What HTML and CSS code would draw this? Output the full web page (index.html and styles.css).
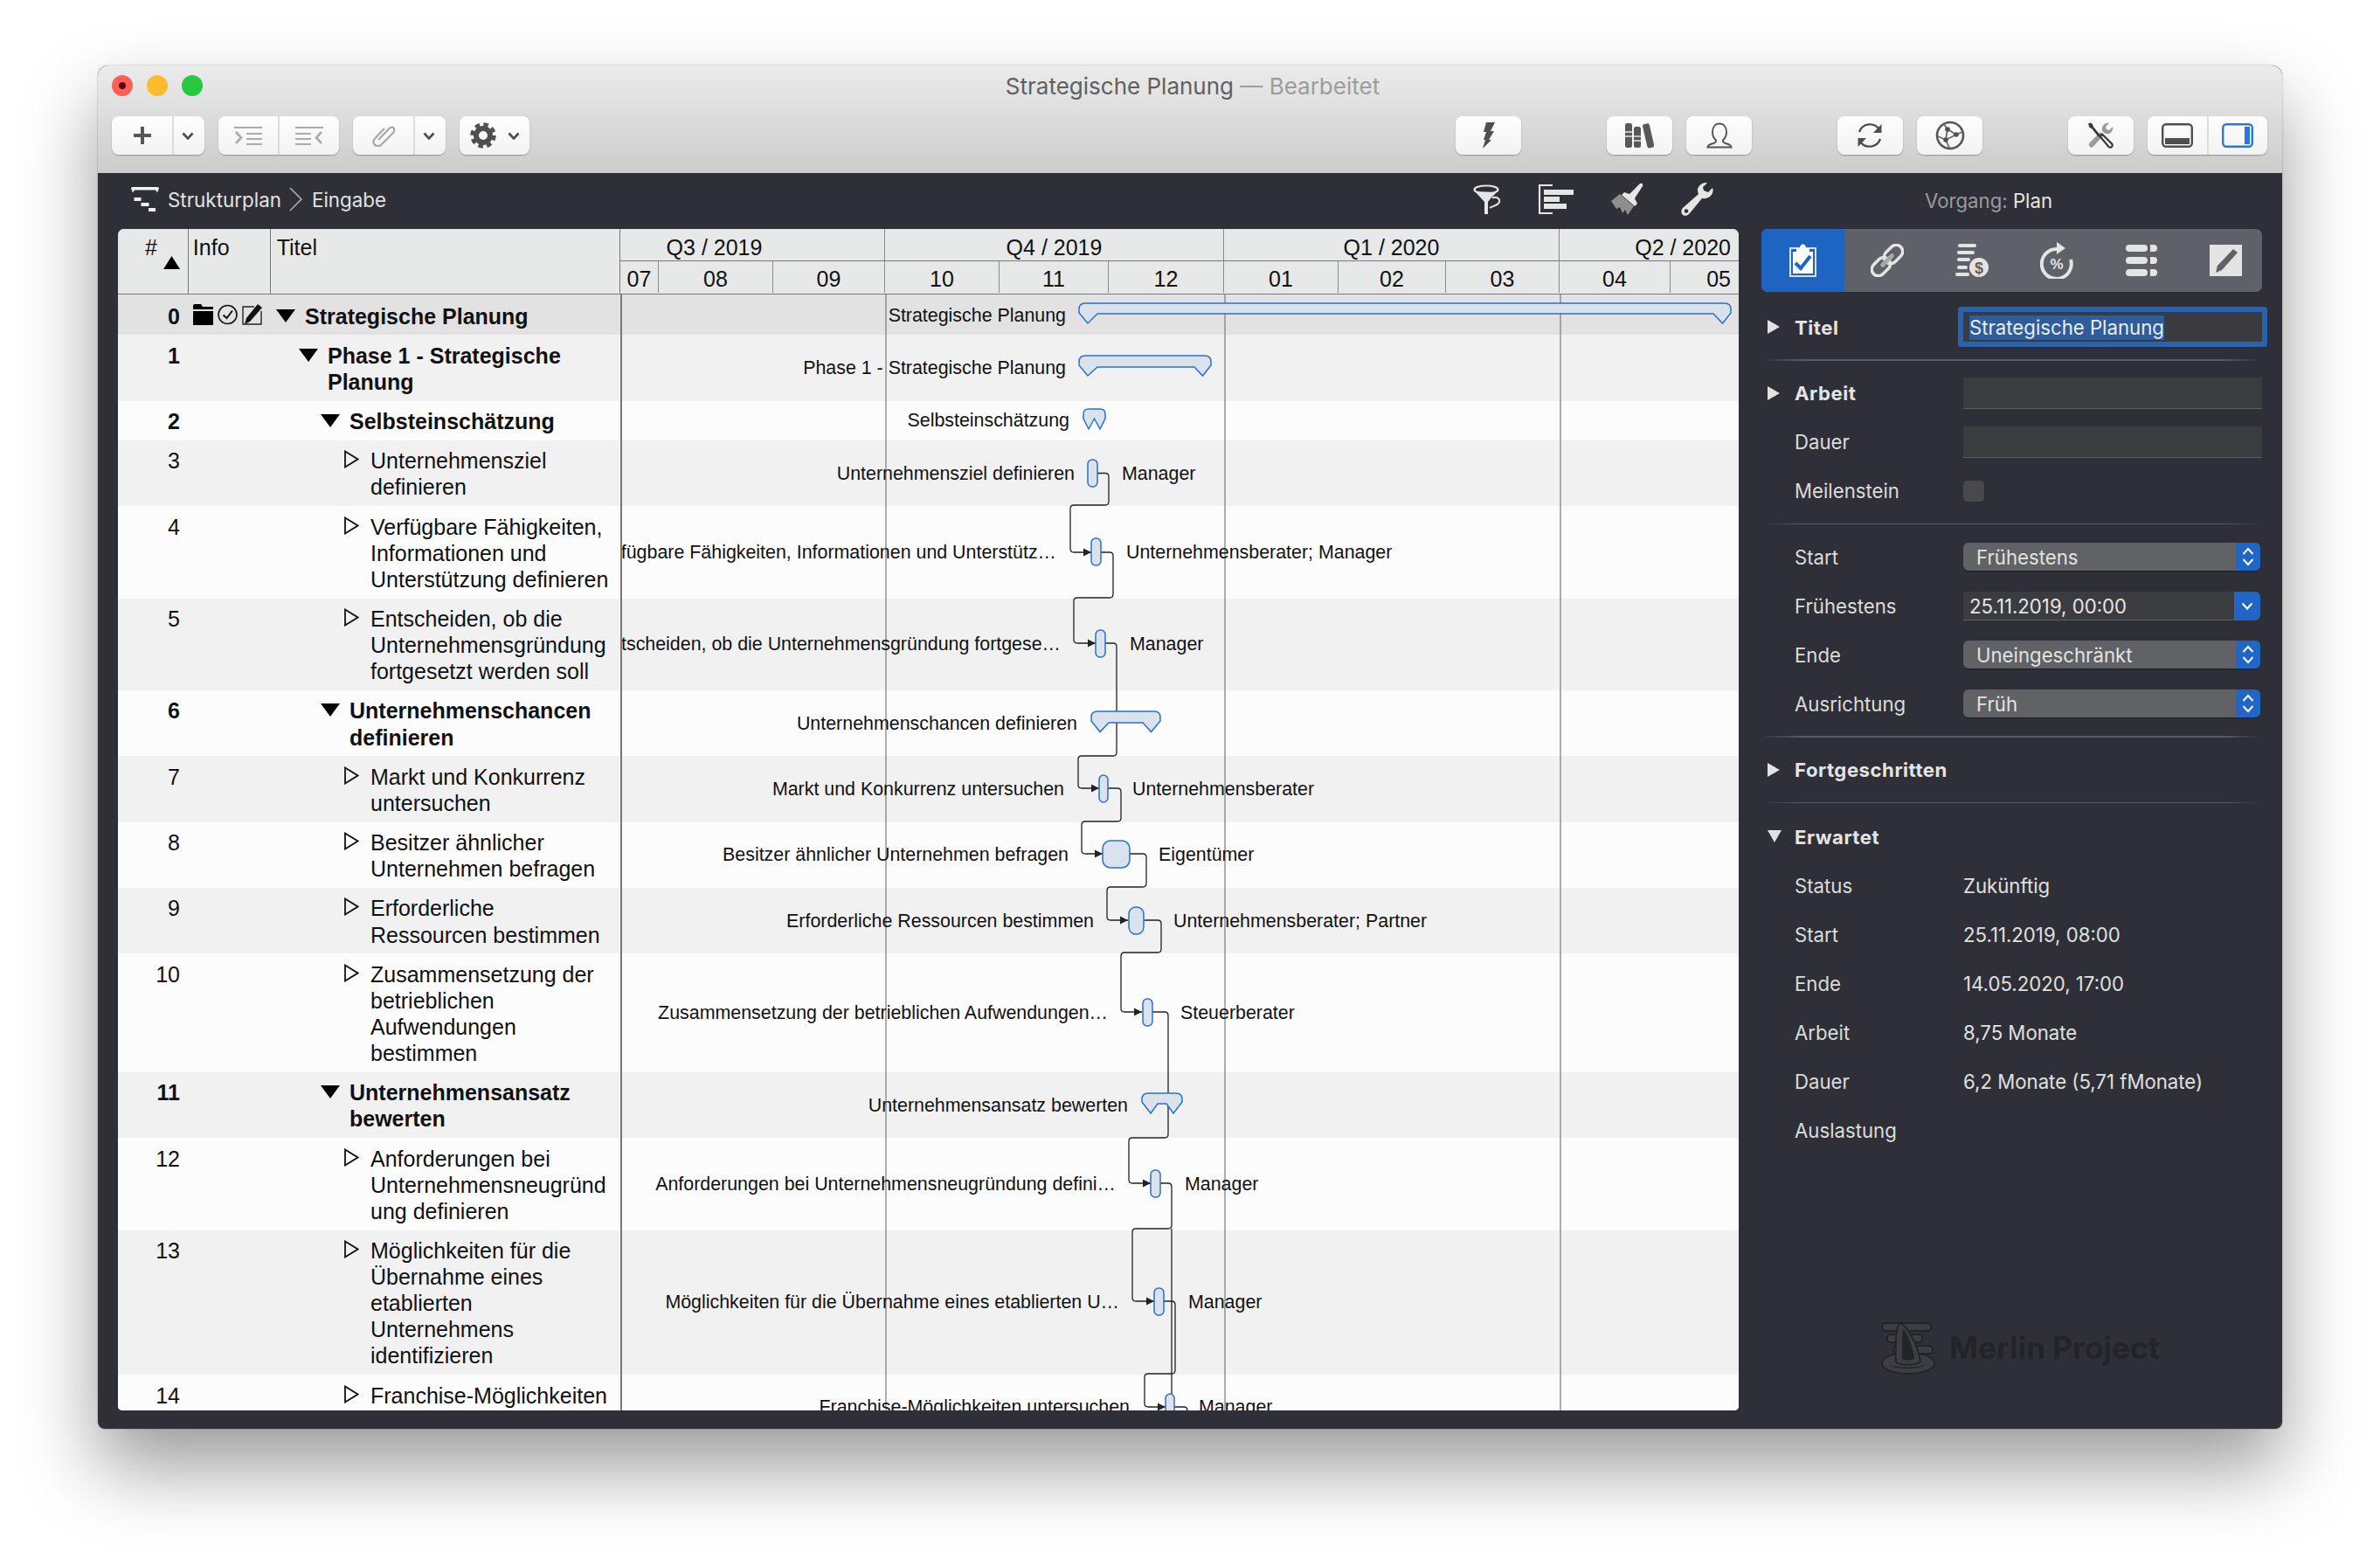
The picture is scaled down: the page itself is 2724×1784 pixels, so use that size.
FILE: index.html
```html
<!DOCTYPE html>
<html lang="de">
<head>
    <meta charset="UTF-8">
    <title>Strategische Planung</title>
    <link rel="stylesheet" href="styles.css">
</head>
<body>
<svg class="defs" width="0" height="0">
    <symbol id="tri-down" viewBox="0 0 22 15"><path d="M0 0H22L11 15Z"/></symbol>
    <symbol id="tri-open" viewBox="0 0 17 21"><path d="M1 1.5L15.5 10.5L1 19.5Z" fill="none" stroke="#111" stroke-width="1.8"/></symbol>
    <symbol id="chev" viewBox="0 0 14 9"><path d="M1.5 1.5L7 7.5L12.5 1.5" fill="none" stroke="#4d4d50" stroke-width="2.6"/></symbol>
    <symbol id="updown" viewBox="0 0 14 24"><path d="M1.5 9L7 3L12.5 9M1.5 15L7 21L12.5 15" fill="none" stroke="#fff" stroke-width="2"/></symbol>
    <symbol id="insp-tri" viewBox="0 0 14 16"><path d="M0 0L14 8L0 16Z" fill="#e2e2e2"/></symbol>
</svg>

<div class="window">
    <div class="titlebar">
        <div class="title-row">
            <div class="lights">
                <span class="light red"></span>
                <span class="light yellow"></span>
                <span class="light green"></span>
            </div>
            <div class="doc-title">Strategische Planung <span class="doc-state">— Bearbeitet</span></div>
            <div></div>
        </div>
        <div class="toolbar">
            <div class="btn-group w-add">
                <div class="btn seg-main"><svg width="20" height="20" viewBox="0 0 20 20"><path d="M8 0h4v8h8v4h-8v8H8v-8H0V8h8z" fill="#56565a"/></svg></div>
                <div class="btn"><svg width="14" height="9"><use href="#chev"/></svg></div>
            </div>
            <div class="btn-group w-indent">
                <div class="btn">
                    <svg width="32" height="21" viewBox="0 0 32 21"><path d="M0 1H32M14 8H32M14 14H32M14 20H32" stroke="#ababab" stroke-width="2"/><path d="M2 6L8 12.500L2 19" fill="none" stroke="#ababab" stroke-width="2.6"/></svg>
                </div>
                <div class="btn">
                    <svg width="32" height="21" viewBox="0 0 32 21"><path d="M0 1H32M0 8H18M0 14H18M0 20H18" stroke="#ababab" stroke-width="2"/><path d="M30 6L24 12.500L30 19" fill="none" stroke="#ababab" stroke-width="2.600"/></svg>
                </div>
            </div>
            <div class="btn-group w-add">
                <div class="btn seg-main">
                    <svg width="28" height="26" viewBox="0 0 28 26"><path d="M8 18L20 5.500C22 3 25.500 3 26 5.500C27 7.500 26 9 24.500 10.500L11 24C8 26 3 25 2.500 21C2 19 3 17.500 4.500 16L15 5" fill="none" stroke="#a8a8a8" stroke-width="2.200"/></svg>
                </div>
                <div class="btn"><svg width="14" height="9"><use href="#chev"/></svg></div>
            </div>
            <div class="btn-group w-gear">
                <div class="btn gear-btn">
                    <svg width="30" height="30" viewBox="0 0 30 30"><circle cx="15" cy="15" r="8" fill="none" stroke="#4f4f52" stroke-width="6"/><circle cx="15" cy="15" r="12.500" fill="none" stroke="#4f4f52" stroke-width="4.500" stroke-dasharray="5.500 4.320"/></svg>
                    <svg width="14" height="9"><use href="#chev"/></svg>
                </div>
            </div>

            <div class="btn-group w-single push">
                <div class="btn"><svg width="14" height="30" viewBox="0 0 14 30"><path d="M4 0H14L9 10H13L7 20H10L0 30L3 20H1L4 11H1Z" fill="#4f4f52"/></svg></div>
            </div>
            <div class="btn-group w-single gap-big">
                <div class="btn">
                    <svg width="33" height="29" viewBox="0 0 33 29"><rect x="0" y="0" width="8" height="28" rx="2.500" fill="#58585c"/><rect x="10" y="4" width="8" height="24" rx="2.500" fill="#58585c"/><rect x="22.500" y="0.500" width="8" height="28" rx="2.500" transform="rotate(-13 26 14)" fill="#58585c"/><path d="M0 10H8M0 15H8M10 15H18M10 20H18" stroke="#e3e3e3" stroke-width="1.400"/></svg>
                </div>
            </div>
            <div class="btn-group w-single gap-small">
                <div class="btn"><svg width="30" height="30" viewBox="0 0 30 30"><path d="M15 1.500c-5 0-8 4-8 10 0 4 2 7 4 9v1c0 2-3 2.500-6 3.500-3 1-3.500 3.500-3.500 3.500h27s-.500-2.500-3.500-3.500c-3-1-6-1.500-6-3.500v-1c2-2 4-5 4-9 0-6-3-10-8-10z" fill="none" stroke="#555558" stroke-width="2"/></svg></div>
            </div>
            <div class="btn-group w-single gap-big">
                <div class="btn">
                    <svg width="30" height="30" viewBox="0 0 30 30"><path d="M3 11A13 13 0 0 1 26 8M27 19A13 13 0 0 1 4 22" fill="none" stroke="#4f4f52" stroke-width="2.300"/><path d="M28.500 2V12H19ZM1.500 28V18H11Z" fill="#4f4f52"/></svg>
                </div>
            </div>
            <div class="btn-group w-single gap-small">
                <div class="btn">
                    <svg width="34" height="34" viewBox="0 0 34 34"><circle cx="17" cy="17" r="15" fill="none" stroke="#555558" stroke-width="2.600"/><path d="M14 10L24 16L12 22L14 10M14 10L9 3M24 16L31 13M12 22L16 31M12 22L3 18" fill="none" stroke="#68686c" stroke-width="1.800"/><circle cx="14" cy="10" r="2.800" fill="#4f4f52"/><circle cx="24" cy="16" r="2.800" fill="#4f4f52"/><circle cx="12" cy="22" r="2.800" fill="#4f4f52"/></svg>
                </div>
            </div>
            <div class="btn-group w-single gap-big">
                <div class="btn">
                    <svg width="30" height="30" viewBox="0 0 30 30"><path d="M3 28c-2-2-1-4 0-5L15 11l3.500 4L6.500 28c-1 1-2 1-3.500 0z M17 10c-1-4 1-8 5-9 2-.500 3 0 3 0l-4 4 1 3 3 1 4-4c.500 3-1 7-4 8-2 .500-4 0-5-.500z" fill="#9b9b9e"/><path d="M1 1.500L3.500 .500L6 2L7 5L15 15L13 17L5 7L2.500 6Z" fill="#39393c"/><path d="M14.500 16L17 13.500L28 24.500C30 27 27 30 24.500 28Z" fill="none" stroke="#39393c" stroke-width="2.200"/></svg>
                </div>
            </div>
            <div class="btn-group w-view gap-small">
                <div class="btn">
                    <svg width="36" height="28" viewBox="0 0 36 28"><rect x="1.200" y="1.200" width="33.600" height="25.600" rx="4" fill="none" stroke="#4f4f52" stroke-width="2.400"/><rect x="4" y="17" width="28" height="7" fill="#4f4f52"/></svg>
                </div>
                <div class="btn">
                    <svg width="36" height="28" viewBox="0 0 36 28"><rect x="1.200" y="1.200" width="33.600" height="25.600" rx="4" fill="none" stroke="#2a76e0" stroke-width="2.400"/><rect x="26" y="4" width="6" height="20" fill="#2a76e0"/></svg>
                </div>
            </div>
        </div>
    </div>

    <div class="content">
        <div class="main">
            <div class="subbar">
                <div class="crumbs">
                    <svg class="crumb-icon" width="32" height="28" viewBox="0 0 32 28"><path d="M1.500 0H30.500Q32 0 32 1.500L30 6.500L28 3.500H4L2 6.500L0 1.500Q0 0 1.500 0Z" fill="#f0f0f0"/><rect x="3.500" y="12" width="8" height="4" fill="#f0f0f0"/><rect x="11.500" y="18" width="9" height="4" fill="#f0f0f0"/><rect x="20" y="24" width="8" height="4" fill="#f0f0f0"/></svg>
                    <span>Strukturplan</span>
                    <svg class="crumb-sep" width="15" height="28" viewBox="0 0 15 28"><path d="M1 1L14 14L1 27" fill="none" stroke="#b5b5b5" stroke-width="1.500"/></svg>
                    <span>Eingabe</span>
                </div>
                <div class="view-tools">
                    <svg width="32" height="34" viewBox="0 0 32 34"><ellipse cx="15" cy="6" rx="13.500" ry="4.500" fill="none" stroke="#e6e6e6" stroke-width="2.200"/><path d="M2 8L13 20V34H17V20L21 15L27 9Z" fill="#e6e6e6"/><path d="M22 15.500C27 13 31 17 30 20C29 24 24 24 19 27" fill="none" stroke="#e6e6e6" stroke-width="2"/></svg>
                    <svg width="40" height="34" viewBox="0 0 40 34"><path d="M16 1H1V33H16" fill="none" stroke="#e6e6e6" stroke-width="2.200"/><rect x="6" y="6" width="34" height="6" fill="#e6e6e6"/><rect x="6" y="14" width="18" height="6" fill="#e6e6e6"/><rect x="6" y="22" width="26" height="6" fill="#e6e6e6"/></svg>
                    <svg width="37" height="38" viewBox="0 0 37 38"><path d="M33 1Q37 0 36 4L27 18L30 24L27 27L12 14L15 11L21 13Z" fill="#e6e6e6"/><path d="M10 13L26 27L19 37L16 31L13 35L10 28L6 30L0 21Z" fill="#8e8e8e"/></svg>
                    <svg width="37" height="38" viewBox="0 0 37 38"><path d="M28 0C24 .500 20 3 19 8C19 10 19.500 11.500 20 13L2 29C-.500 32 0 36 3 37.500C6 38.500 8.500 37 10 35L24 18C27 18.500 31 18 34 15C37 12 37 8 36 6L31 11L26 9L25 5L30 .500Z" fill="#e6e6e6"/><circle cx="6" cy="32.500" r="2.300" fill="#2f3036"/></svg>
                </div>
            </div>

            <div class="table">
                <div class="table-head">
                    <div class="head-num">
                        <span>#</span>
                        <svg class="sort-tri" width="19" height="15" viewBox="0 0 19 15"><path d="M9.500 0L19 15H0Z"/></svg>
                    </div>
                    <div class="head-info">Info</div>
                    <div class="head-title">Titel</div>
                    <div class="timeline">
                        <div class="quarters">
                            <div class="q q3">Q3 / 2019</div>
                            <div class="q q4">Q4 / 2019</div>
                            <div class="q q1">Q1 / 2020</div>
                            <div class="q q2">Q2 / 2020</div>
                        </div>
                        <div class="months">
                            <div class="m m07">07</div>
                            <div class="m m08">08</div>
                            <div class="m m09">09</div>
                            <div class="m m10">10</div>
                            <div class="m m11">11</div>
                            <div class="m m12">12</div>
                            <div class="m m01">01</div>
                            <div class="m m02">02</div>
                            <div class="m m03">03</div>
                            <div class="m m04">04</div>
                            <div class="m m05">05</div>
                        </div>
                    </div>
                </div>

                <div class="rows">
                    <div class="row top bold">
                        <div class="num">0</div>
                        <div class="info">
                            <svg width="23" height="24" viewBox="0 0 23 24"><path d="M0 2Q0 0 2 0H9L11 3H23V6H0ZM0 8H23V24H0Z"/></svg>
                            <svg width="23" height="24" viewBox="0 0 23 24"><circle cx="11.500" cy="12" r="10.500" fill="none" stroke="#111" stroke-width="1.600"/><path d="M6.500 12.500L10.500 16L17 7.500" fill="none" stroke="#111" stroke-width="2"/></svg>
                            <svg width="23" height="24" viewBox="0 0 23 24"><path d="M14 3H1V23H22V8" fill="none" stroke="#222" stroke-width="1.400"/><path d="M18 0L23 4L9 20L3 23L5 16Z" fill="#111"/></svg>
                        </div>
                        <div class="title lv0"><svg class="tri" width="22" height="15"><use href="#tri-down"/></svg><div>Strategische Planung</div></div>
                    </div>
                    <div class="row odd bold">
                        <div class="num">1</div><div class="info"></div>
                        <div class="title lv1"><svg class="tri" width="22" height="15"><use href="#tri-down"/></svg><div>Phase 1 - Strategische<br>Planung</div></div>
                    </div>
                    <div class="row even bold">
                        <div class="num">2</div><div class="info"></div>
                        <div class="title lv2"><svg class="tri" width="22" height="15"><use href="#tri-down"/></svg><div>Selbsteinschätzung</div></div>
                    </div>
                    <div class="row odd">
                        <div class="num">3</div><div class="info"></div>
                        <div class="title lv3"><svg class="tri-o" width="17" height="21"><use href="#tri-open"/></svg><div>Unternehmensziel<br>definieren</div></div>
                    </div>
                    <div class="row even">
                        <div class="num">4</div><div class="info"></div>
                        <div class="title lv3"><svg class="tri-o" width="17" height="21"><use href="#tri-open"/></svg><div>Verfügbare Fähigkeiten,<br>Informationen und<br>Unterstützung definieren</div></div>
                    </div>
                    <div class="row odd">
                        <div class="num">5</div><div class="info"></div>
                        <div class="title lv3"><svg class="tri-o" width="17" height="21"><use href="#tri-open"/></svg><div>Entscheiden, ob die<br>Unternehmensgründung<br>fortgesetzt werden soll</div></div>
                    </div>
                    <div class="row even bold">
                        <div class="num">6</div><div class="info"></div>
                        <div class="title lv2"><svg class="tri" width="22" height="15"><use href="#tri-down"/></svg><div>Unternehmenschancen<br>definieren</div></div>
                    </div>
                    <div class="row odd">
                        <div class="num">7</div><div class="info"></div>
                        <div class="title lv3"><svg class="tri-o" width="17" height="21"><use href="#tri-open"/></svg><div>Markt und Konkurrenz<br>untersuchen</div></div>
                    </div>
                    <div class="row even">
                        <div class="num">8</div><div class="info"></div>
                        <div class="title lv3"><svg class="tri-o" width="17" height="21"><use href="#tri-open"/></svg><div>Besitzer ähnlicher<br>Unternehmen befragen</div></div>
                    </div>
                    <div class="row odd">
                        <div class="num">9</div><div class="info"></div>
                        <div class="title lv3"><svg class="tri-o" width="17" height="21"><use href="#tri-open"/></svg><div>Erforderliche<br>Ressourcen bestimmen</div></div>
                    </div>
                    <div class="row even">
                        <div class="num">10</div><div class="info"></div>
                        <div class="title lv3"><svg class="tri-o" width="17" height="21"><use href="#tri-open"/></svg><div>Zusammensetzung der<br>betrieblichen<br>Aufwendungen<br>bestimmen</div></div>
                    </div>
                    <div class="row odd bold">
                        <div class="num">11</div><div class="info"></div>
                        <div class="title lv2"><svg class="tri" width="22" height="15"><use href="#tri-down"/></svg><div>Unternehmensansatz<br>bewerten</div></div>
                    </div>
                    <div class="row even">
                        <div class="num">12</div><div class="info"></div>
                        <div class="title lv3"><svg class="tri-o" width="17" height="21"><use href="#tri-open"/></svg><div>Anforderungen bei<br>Unternehmensneugründ<br>ung definieren</div></div>
                    </div>
                    <div class="row odd">
                        <div class="num">13</div><div class="info"></div>
                        <div class="title lv3"><svg class="tri-o" width="17" height="21"><use href="#tri-open"/></svg><div>Möglichkeiten für die<br>Übernahme eines<br>etablierten<br>Unternehmens<br>identifizieren</div></div>
                    </div>
                    <div class="row even">
                        <div class="num">14</div><div class="info"></div>
                        <div class="title lv3"><svg class="tri-o" width="17" height="21"><use href="#tri-open"/></svg><div>Franchise-Möglichkeiten</div></div>
                    </div>

                    <svg class="gantt" width="1280" height="1277" viewBox="710 337 1280 1277">
                        <defs>
                            <marker id="arrow" markerUnits="userSpaceOnUse" markerWidth="10" markerHeight="10" refX="9" refY="5" orient="auto"><path d="M0 0.500L9 5L0 9.500Z" fill="#222"/></marker>
                        </defs>
                        <path class="grid" d="M1014 337V1614M1402 337V1614M1786 337V1614"/>

                        <g class="links">
                            <path d="M1256 541.500H1265Q1269 541.500 1269 545.500V574Q1269 578 1265 578H1229Q1225 578 1225 582V628Q1225 632 1229 632H1249" marker-end="url(#arrow)"/>
                            <path d="M1260 632H1270Q1274 632 1274 636V680Q1274 684 1270 684H1233Q1229 684 1229 688V732Q1229 736 1233 736H1254" marker-end="url(#arrow)"/>
                            <path d="M1265 736H1274Q1278 736 1278 740V861Q1278 865 1274 865H1238Q1234 865 1234 869V898Q1234 902 1238 902H1258" marker-end="url(#arrow)"/>
                            <path d="M1268 902H1279Q1283 902 1283 906V936Q1283 940 1279 940H1242Q1238 940 1238 944V973Q1238 977 1242 977H1262" marker-end="url(#arrow)"/>
                            <path d="M1293 977H1308Q1312 977 1312 981V1011Q1312 1015 1308 1015H1271Q1267 1015 1267 1019V1049Q1267 1053 1271 1053H1291" marker-end="url(#arrow)"/>
                            <path d="M1310 1053H1325Q1329 1053 1329 1057V1086Q1329 1090 1325 1090H1287Q1283 1090 1283 1094V1154Q1283 1158 1287 1158H1307" marker-end="url(#arrow)"/>
                            <path d="M1319 1158H1333Q1337 1158 1337 1162V1298Q1337 1302 1333 1302H1296Q1292 1302 1292 1306V1350Q1292 1354 1296 1354H1317" marker-end="url(#arrow)"/>
                            <path d="M1328 1354H1337Q1341 1354 1341 1358V1402Q1341 1406 1337 1406H1300Q1296 1406 1296 1410V1485Q1296 1489 1300 1489H1321" marker-end="url(#arrow)"/>
                            <path d="M1341 1406V1614"/>
                            <path d="M1332 1489H1341Q1345 1489 1345 1493V1568Q1345 1572 1341 1572H1314Q1310 1572 1310 1576V1606Q1310 1610 1314 1610H1334" marker-end="url(#arrow)"/>
                            <path d="M1344 1610H1355Q1359 1610 1359 1614"/>
                        </g>

                        <g class="bars">
                            <path d="M1242 347H1974Q1981 347 1981 354V358L1971.500 370L1961 359H1256L1245 370L1235 358V354Q1235 347 1242 347Z"/>
                            <path d="M1242 407H1379Q1386 407 1386 414V418L1376.500 430L1367 420H1256L1245 430L1235 418V414Q1235 407 1242 407Z"/>
                            <path d="M1246 468H1259Q1265 468 1265 474V479L1259 491L1252.500 479L1246 491L1240 479V474Q1240 468 1246 468Z"/>
                            <rect x="1245" y="526" width="11" height="31" rx="5"/>
                            <rect x="1249" y="616" width="11" height="31" rx="5"/>
                            <rect x="1254" y="721" width="11" height="31" rx="5"/>
                            <path d="M1256 814H1321Q1328 814 1328 821V825L1317.500 837.500L1308 827H1269L1259 837.500L1249 825V821Q1249 814 1256 814Z"/>
                            <rect x="1258" y="887" width="10" height="31" rx="5"/>
                            <rect x="1262" y="962" width="31" height="31" rx="9"/>
                            <rect x="1292" y="1038" width="17" height="31" rx="8"/>
                            <rect x="1308" y="1143" width="11" height="31" rx="5"/>
                            <path d="M1314 1251H1346Q1353 1251 1353 1258V1261L1343 1274L1335 1263H1325L1317 1274L1307 1261V1258Q1307 1251 1314 1251Z"/>
                            <rect x="1317" y="1339" width="11" height="31" rx="5"/>
                            <rect x="1321" y="1474" width="11" height="31" rx="5"/>
                            <rect x="1334" y="1595" width="10" height="31" rx="5"/>
                        </g>

                        <g class="labels-left">
                            <text x="1220" y="368">Strategische Planung</text>
                            <text x="1220" y="428">Phase 1 - Strategische Planung</text>
                            <text x="1224" y="488">Selbsteinschätzung</text>
                            <text x="1230" y="549">Unternehmensziel definieren</text>
                            <text x="1209" y="639">Verfügbare Fähigkeiten, Informationen und Unterstütz…</text>
                            <text x="1214" y="744">Entscheiden, ob die Unternehmensgründung fortgese…</text>
                            <text x="1233" y="835">Unternehmenschancen definieren</text>
                            <text x="1218" y="910">Markt und Konkurrenz untersuchen</text>
                            <text x="1223" y="985">Besitzer ähnlicher Unternehmen befragen</text>
                            <text x="1252" y="1061">Erforderliche Ressourcen bestimmen</text>
                            <text x="1268" y="1166">Zusammensetzung der betrieblichen Aufwendungen…</text>
                            <text x="1291" y="1272">Unternehmensansatz bewerten</text>
                            <text x="1277" y="1362">Anforderungen bei Unternehmensneugründung defini…</text>
                            <text x="1281" y="1497">Möglichkeiten für die Übernahme eines etablierten U…</text>
                            <text x="1293" y="1617">Franchise-Möglichkeiten untersuchen</text>
                        </g>
                        <g class="labels-right">
                            <text x="1284" y="549">Manager</text>
                            <text x="1289" y="639">Unternehmensberater; Manager</text>
                            <text x="1293" y="744">Manager</text>
                            <text x="1296" y="910">Unternehmensberater</text>
                            <text x="1326" y="985">Eigentümer</text>
                            <text x="1343" y="1061">Unternehmensberater; Partner</text>
                            <text x="1351" y="1166">Steuerberater</text>
                            <text x="1356" y="1362">Manager</text>
                            <text x="1360" y="1497">Manager</text>
                            <text x="1372" y="1617">Manager</text>
                        </g>
                    </svg>
                </div>
            </div>
        </div>

        <div class="inspector">
            <div class="insp-head"><span class="dim">Vorgang:</span> Plan</div>
            <div class="tabs">
                <div class="tab active">
                    <svg width="31" height="38" viewBox="0 0 31 38"><rect x="1" y="5" width="29" height="32" fill="none" stroke="#e8eefb" stroke-width="1.800"/><rect x="4" y="9" width="23" height="25" fill="#fff"/><path d="M8 5H12C12 2 13.500 .500 15.500 .500C17.500 .500 19 2 19 5H23V10H8Z" fill="#fff"/><path d="M7 22L13 28L24 14" fill="none" stroke="#1d64c3" stroke-width="4"/></svg>
                </div>
                <div class="tab">
                    <svg width="38" height="38" viewBox="0 0 38 38"><g transform="rotate(-45 19 19)"><rect x="-3" y="11.500" width="24" height="15" rx="7.500" fill="none" stroke="#e4e4e4" stroke-width="3.500"/><rect x="17" y="11.500" width="24" height="15" rx="7.500" fill="none" stroke="#e4e4e4" stroke-width="3.500"/><rect x="9" y="16.500" width="20" height="5" rx="2.500" fill="#a9a9a9"/></g></svg>
                </div>
                <div class="tab">
                    <svg width="38" height="38" viewBox="0 0 38 38"><rect x="3" y="0" width="21" height="4" rx="2" fill="#e4e4e4"/><rect x="2" y="8" width="20" height="4" rx="2" fill="#e4e4e4"/><rect x="2" y="16" width="15" height="4" rx="2" fill="#e4e4e4"/><rect x="2" y="25" width="12" height="4" rx="2" fill="#e4e4e4"/><rect x="0" y="33" width="16" height="4" rx="2" fill="#e4e4e4"/><circle cx="27" cy="27" r="11" fill="#e4e4e4"/><text class="dollar" x="27" y="33.500">$</text></svg>
                </div>
                <div class="tab">
                    <svg width="38" height="42" viewBox="0 0 38 42"><path d="M19 8A17 17 0 1 0 35 20" fill="none" stroke="#e4e4e4" stroke-width="4"/><path d="M19 0L29 7L19 14Z" fill="#e4e4e4"/><text class="percent" x="19" y="31">%</text></svg>
                </div>
                <div class="tab">
                    <svg width="36" height="36" viewBox="0 0 36 36"><rect x="0" y="0" width="25" height="8" rx="4" fill="#e4e4e4"/><path d="M28 0H32A4 4 0 0 1 32 8H28Z" fill="#e4e4e4"/><rect x="0" y="14" width="25" height="8" rx="4" fill="#e4e4e4"/><path d="M28 14H32A4 4 0 0 1 32 22H28Z" fill="#e4e4e4"/><rect x="0" y="28" width="25" height="8" rx="4" fill="#e4e4e4"/><path d="M28 28H32A4 4 0 0 1 32 36H28Z" fill="#e4e4e4"/></svg>
                </div>
                <div class="tab">
                    <svg width="37" height="36" viewBox="0 0 37 36"><rect width="37" height="36" fill="#e4e4e4"/><path d="M27 5L32 9L14 29L7 32L9 24Z" fill="#5f6267"/></svg>
                </div>
            </div>

            <div class="insp-row first">
                <svg width="14" height="16"><use href="#insp-tri"/></svg>
                <div class="lbl strong">Titel</div>
                <div class="title-input"><span class="selected">Strategische Planung</span></div>
            </div>
            <div class="rule"></div>
            <div class="insp-row">
                <svg width="14" height="16"><use href="#insp-tri"/></svg>
                <div class="lbl strong">Arbeit</div>
                <div class="field tall"></div>
            </div>
            <div class="insp-row">
                <i></i><div class="lbl">Dauer</div>
                <div class="field tall"></div>
            </div>
            <div class="insp-row">
                <i></i><div class="lbl">Meilenstein</div>
                <div class="check"></div>
            </div>
            <div class="rule"></div>
            <div class="insp-row">
                <i></i><div class="lbl">Start</div>
                <div class="select"><span>Frühestens</span><b><svg width="14" height="24"><use href="#updown"/></svg></b></div>
            </div>
            <div class="insp-row">
                <i></i><div class="lbl">Frühestens</div>
                <div class="date"><span>25.11.2019, 00:00</span><b><svg width="14" height="9" viewBox="0 0 14 9"><path d="M1.500 1.500L7 7.500L12.500 1.500" fill="none" stroke="#fff" stroke-width="2.200"/></svg></b></div>
            </div>
            <div class="insp-row">
                <i></i><div class="lbl">Ende</div>
                <div class="select"><span>Uneingeschränkt</span><b><svg width="14" height="24"><use href="#updown"/></svg></b></div>
            </div>
            <div class="insp-row">
                <i></i><div class="lbl">Ausrichtung</div>
                <div class="select"><span>Früh</span><b><svg width="14" height="24"><use href="#updown"/></svg></b></div>
            </div>
            <div class="rule"></div>
            <div class="insp-row">
                <svg width="14" height="16"><use href="#insp-tri"/></svg>
                <div class="lbl strong">Fortgeschritten</div>
            </div>
            <div class="rule"></div>
            <div class="insp-row expected-head">
                <svg width="16" height="14" viewBox="0 0 16 14"><path d="M0 0H16L8 14Z" fill="#e2e2e2"/></svg>
                <div class="lbl strong">Erwartet</div>
            </div>
            <div class="insp-row"><i></i><div class="lbl">Status</div><div class="val">Zukünftig</div></div>
            <div class="insp-row"><i></i><div class="lbl">Start</div><div class="val">25.11.2019, 08:00</div></div>
            <div class="insp-row"><i></i><div class="lbl">Ende</div><div class="val">14.05.2020, 17:00</div></div>
            <div class="insp-row"><i></i><div class="lbl">Arbeit</div><div class="val">8,75 Monate</div></div>
            <div class="insp-row"><i></i><div class="lbl">Dauer</div><div class="val">6,2 Monate (5,71 fMonate)</div></div>
            <div class="insp-row"><i></i><div class="lbl">Auslastung</div></div>

            <div class="logo">
                <svg width="62" height="62" viewBox="0 0 62 62"><g fill="#3d3e43" stroke="#222327" stroke-width="1.800"><rect x="1" y="3" width="56" height="9" rx="4"/><rect x="7" y="16" width="40" height="9" rx="4"/><rect x="14" y="29" width="45" height="9" rx="4"/><ellipse cx="31" cy="49" rx="30" ry="12"/></g><path d="M17 48C16 30 17 8 21 3C28 4 42 26 45 47C38 52 24 52 17 48Z" fill="#3d3e43" stroke="#222327" stroke-width="1.800"/><path d="M24 44C24 32 24 16 25 10C30 14 37 32 38 44C33 46 28 46 24 44Z" fill="#232428"/><path d="M9 50C13 55 48 55 53 49C49 56 14 58 9 50Z" fill="#232428"/></svg>
                <span>Merlin Project</span>
            </div>
        </div>
    </div>
</div>
</body>
</html>
```

FILE: styles.css
```css
html, body {
    margin: 0;
    height: 100%;
    overflow: hidden;
    background: #fff;
}
.defs {
    position: absolute;
}
.window {
    width: 2500px;
    height: 1560px;
    margin: 75px 0 0 112px;
    border-radius: 12px 12px 8px 8px;
    background: #2f3037;
    box-shadow: 0 44px 88px rgba(0, 0, 0, .4), 0 0 2px rgba(0, 0, 0, .35);
    display: flex;
    flex-direction: column;
    overflow: hidden;
    font-family: Inter, "Liberation Sans", sans-serif;
}

/* title bar + toolbar */
.titlebar {
    height: 123px;
    flex: none;
    background: linear-gradient(#ebebeb, #cccccc);
    box-sizing: border-box;
}
.title-row {
    height: 58px;
    padding: 0 16px 12px;
    box-sizing: border-box;
    display: grid;
    grid-template-columns: 1fr auto 1fr;
    align-items: center;
}
.lights {
    display: flex;
    gap: 16px;
}
.light {
    width: 24px;
    height: 24px;
    border-radius: 50%;
}
.light.red { background: #ff5f57; position: relative; }
.light.red::after {
    content: "";
    position: absolute;
    left: 8px;
    top: 8px;
    width: 8px;
    height: 8px;
    border-radius: 50%;
    background: #5a0d08;
}
.light.yellow { background: #febb2e; }
.light.green { background: #28c840; }
.doc-title {
    font-size: 26px;
    color: #5f5f5f;
    padding-left: 6px;
}
.doc-state { color: #9c9c9c; }

.toolbar {
    display: flex;
    padding: 0 17px 0 16px;
}
.btn-group {
    display: flex;
    height: 44px;
    border-radius: 8px;
    background: linear-gradient(#fdfdfd, #f3f3f3);
    box-shadow: 0 1px 1.5px rgba(0, 0, 0, .3);
    margin-right: 16px;
}
.btn {
    flex: 1;
    display: flex;
    align-items: center;
    justify-content: center;
    border-left: 2px solid #dcdcdc;
}
.btn:first-child { border-left: 0; }
.seg-main { flex: none; width: 69px; }
.seg-main + .btn { padding-right: 4px; }
.w-add { width: 106px; }
.w-indent { width: 138px; }
.w-gear { width: 80px; margin-right: 0; }
.gear-btn { gap: 13px; }
.w-single { width: 75px; margin-right: 0; }
.w-view { width: 137px; margin-right: 0; }
.push { margin-left: 1060px; }
.gap-big { margin-left: 97.5px; }
.gap-small { margin-left: 16.5px; }

/* left side */
.content {
    flex: 1;
    display: flex;
    min-height: 0;
}
.main {
    width: 1855px;
    margin-left: 23px;
    flex: none;
    display: flex;
    flex-direction: column;
}
.subbar {
    height: 64px;
    flex: none;
    display: flex;
    justify-content: space-between;
    align-items: center;
    padding: 0 29px 4px 15px;
    box-sizing: border-box;
}
.crumbs {
    display: flex;
    align-items: center;
    color: #e2e2e2;
    font-size: 22.4px;
}
.crumb-icon { margin-right: 10px; }
.crumb-sep { margin: 0 11px 0 9px; }
.view-tools {
    display: flex;
    align-items: center;
    gap: 43px;
}

.table {
    width: 1855px;
    height: 1352px;
    background: #fcfcfc;
    border-radius: 7px 7px 5px 5px;
    overflow: hidden;
    font-family: "Liberation Sans", Arial, sans-serif;
    font-size: 25px;
    color: #111;
}
.table-head {
    height: 75px;
    box-sizing: border-box;
    display: flex;
    background: #e7e8e8;
    border-bottom: 1.5px solid #76787a;
}
.head-num {
    width: 81px;
    box-sizing: border-box;
    border-right: 1.5px solid #76787a;
    display: flex;
    flex-direction: column;
    align-items: flex-end;
}
.head-num span {
    margin: 7px 35px 0 0;
    line-height: 28px;
}
.sort-tri { margin: -4px 9px 0 0; }
.head-info {
    width: 94px;
    box-sizing: border-box;
    border-right: 1.5px solid #76787a;
    padding: 7px 0 0 5px;
    line-height: 28px;
}
.head-title {
    width: 400px;
    box-sizing: border-box;
    padding: 7px 0 0 7px;
    line-height: 28px;
}
.timeline {
    flex: 1;
    border-left: 1.5px solid #76787a;
}
.quarters, .months { display: flex; }
.quarters {
    height: 37px;
    border-bottom: 1.5px solid #76787a;
    box-sizing: border-box;
    line-height: 42px;
}
.months {
    height: 36px;
    line-height: 40px;
}
.q, .m {
    text-align: center;
    border-right: 1.5px solid #8a8c8e;
    box-sizing: border-box;
    flex: none;
}
.q3 { width: 303px; padding-right: 87px; }
.q4 { width: 388px; }
.q1 { width: 384px; }
.q2 { width: 205px; border-right: 0; text-align: right; padding-right: 9px; }
.m07 { width: 44px; }
.m08 { width: 131px; }
.m09 { width: 128px; }
.m10 { width: 131px; }
.m11 { width: 125px; }
.m12 { width: 132px; }
.m01 { width: 131px; }
.m02 { width: 123px; }
.m03 { width: 130px; }
.m04 { width: 127px; }
.m05 { width: 78px; border-right: 0; text-align: right; padding-right: 9px; }

/* rows */
.rows {
    position: relative;
    height: 1277px;
    overflow: hidden;
}
.row {
    display: flex;
    line-height: 30.1px;
    padding: 8.5px 0 6.65px;
}
.row.top { background: #e2e2e2; padding-top: 9.5px; }
.row.odd { background: #f1f1f1; }
.row.even { background: #fcfcfc; }
.row.bold { font-weight: 700; }
.num {
    width: 71px;
    flex: none;
    text-align: right;
}
.info {
    width: 103px;
    flex: none;
    padding-left: 15px;
    box-sizing: border-box;
    display: flex;
    gap: 5px;
    align-items: flex-start;
    margin-top: 1px;
}
.title {
    display: flex;
    flex: none;
    width: 401px;
    box-sizing: border-box;
    white-space: nowrap;
}
.tri { margin: 7px 11px 0 0; flex: none; }
.tri-o { margin: 3px 13px 0 0; flex: none; }
.lv0 { padding-left: 7px; }
.lv1 { padding-left: 33px; }
.lv2 { padding-left: 58px; }
.lv3 { padding-left: 85px; }

.gantt {
    position: absolute;
    left: 575px;
    top: 0;
    overflow: hidden;
    font-size: 21.4px;
    fill: #111;
}
.grid {
    stroke: #77797b;
    stroke-width: 1.2;
    fill: none;
}
.links path {
    fill: none;
    stroke: #222;
    stroke-width: 1.300;
}
.bars path, .bars rect {
    fill: #dae2ec;
    stroke: #2b6fd0;
    stroke-width: 1.500;
}
.labels-left { text-anchor: end; }
.rows::after {
    content: "";
    position: absolute;
    left: 575px;
    top: 0;
    bottom: 0;
    width: 1.500px;
    background: #76787a;
}

/* inspector */
.inspector {
    width: 573px;
    flex: none;
    margin-left: 26px;
    display: flex;
    flex-direction: column;
    color: #dcdcdc;
    font-size: 22.2px;
}
.insp-head {
    height: 64px;
    flex: none;
    padding: 19px 0 0 187px;
    line-height: 26px;
    box-sizing: border-box;
    color: #e6e6e6;
}
.dim { color: #9b9b9f; }
.tabs {
    height: 72px;
    flex: none;
    display: flex;
    overflow: hidden;
    border-radius: 7px;
    background: #5e6167;
}
.tab {
    width: 97px;
    flex: none;
    display: flex;
    align-items: center;
    justify-content: center;
}
.tab.active { width: 95px; background: #1d64c3; }
.dollar {
    font-family: "Liberation Sans", sans-serif;
    font-size: 18px;
    font-weight: 700;
    text-anchor: middle;
    fill: #5e6167;
}
.percent {
    font-family: "Liberation Sans", sans-serif;
    font-size: 17px;
    font-weight: 700;
    text-anchor: middle;
    fill: #e4e4e4;
}
.insp-row {
    height: 56px;
    flex: none;
    display: flex;
    align-items: center;
    padding-left: 7px;
}
.insp-row > svg, .insp-row > i {
    width: 14px;
    flex: none;
    margin-right: 17px;
}
.insp-row.first { margin-top: 12px; }
.insp-row.expected-head { margin-top: 1px; }
.expected-head > svg { width: 16px; margin-right: 15px; }
.lbl {
    width: 193px;
    flex: none;
}
.lbl.strong {
    font-weight: 700;
    color: #e4e4e4;
    letter-spacing: .5px;
}
.val { color: #e0e0e0; }
.rule {
    height: 1.500px;
    margin: 9px 0;
    flex: none;
    background: linear-gradient(90deg, rgba(90, 92, 97, 0), #5a5c61 8%, #5a5c61 92%, rgba(90, 92, 97, 0));
}
.title-input {
    width: 342px;
    height: 34px;
    background: #3a3b3f;
    box-shadow: 0 0 0 6px #2962af;
    border-radius: 1px;
    box-sizing: border-box;
    padding: 4px 0 0 7px;
    line-height: 28px;
    color: #ececec;
    white-space: nowrap;
}
.selected { background: #2d5d9c; display: inline-block; }
.field {
    width: 342px;
    background: #3b3c40;
    border-bottom: 1.500px solid #5c5d61;
    box-sizing: border-box;
}
.field.tall { height: 36px; }
.check {
    width: 24px;
    height: 24px;
    border-radius: 5px;
    background: #48494d;
}
.select, .date {
    width: 340px;
    height: 32px;
    border-radius: 6px;
    overflow: hidden;
    display: flex;
    align-items: center;
    justify-content: space-between;
    background: #606266;
    box-shadow: 0 1px 1px rgba(0, 0, 0, .4);
}
.select span { padding-left: 15px; color: #e2e2e2; }
.select b, .date b {
    height: 100%;
    width: 28px;
    background: #1f66c6;
    display: flex;
    align-items: center;
    justify-content: center;
}
.date {
    background: #3b3c40;
    border-radius: 0 6px 6px 0;
    box-shadow: 0 1px 0 #5c5d61;
}
.date span { padding-left: 7px; color: #e6e6e6; }
.date b { width: 30px; }
.logo {
    margin-top: auto;
    margin-bottom: 62px;
    margin-left: 137px;
    display: flex;
    align-items: center;
    gap: 16px;
    font-size: 35.3px;
    font-weight: 700;
    color: #232428;
}
```
